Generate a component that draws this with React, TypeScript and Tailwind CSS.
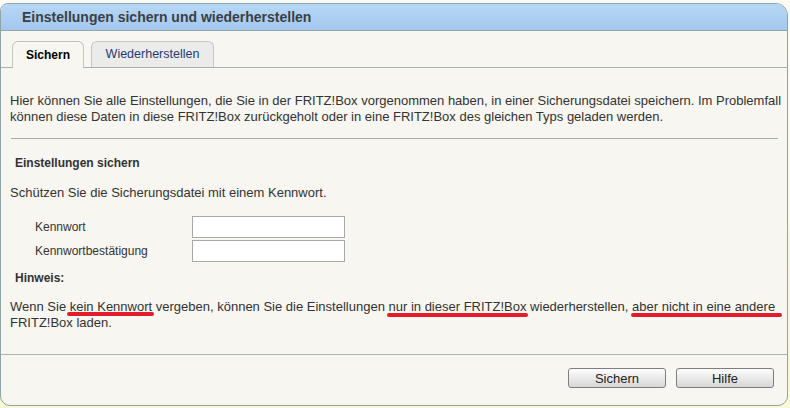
import type { ReactNode } from 'react'

// Hand-drawn red marker stroke under a phrase
function Marked({ children, className }: { children: ReactNode; className: string }) {
  return (
    <span className="relative">
      {children}
      <span className={`absolute h-[4px] rounded-full bg-[#e41b2b] ${className}`} />
    </span>
  )
}

export default function App() {
  return (
    <div className="w-[790px] h-[408px] pt-[3px] pr-[2px] pb-[2px] bg-gradient-to-b from-[#fbfbf6] to-[#f8f9d6] font-['Liberation_Sans',Arial,sans-serif] text-[#333]">
      <div className="h-[403px] flex flex-col border border-[#8fa4a4] rounded-tl-[8px] rounded-tr-[12px] rounded-b-[10px] bg-[#f7f6f1] overflow-hidden">
        {/* Title bar */}
        <div className="h-[27px] shrink-0 flex items-center pl-[21px] border-b border-[#93a5a5] bg-gradient-to-b from-[#b7d7f5] to-[#a2c8ee] text-[14px] font-bold text-[#3b3f44]">
          Einstellungen sichern und wiederherstellen
        </div>

        {/* Tabs */}
        <div className="h-[37px] shrink-0 flex items-end gap-[7px] pt-[10px] pl-[11px] border-b border-[#a7b3b0]">
          <div className="w-[72px] h-[27px] -mb-px flex items-center justify-center border-x border-t border-[#bfc5c2] rounded-t-[6px] bg-[#f7f6f1] text-[12px] font-bold text-black">
            Sichern
          </div>
          <div className="w-[123px] h-[26px] flex items-center justify-center border-x border-t border-[#c3c7c5] rounded-t-[6px] bg-[#ebebea] text-[12.5px] text-[#1f3c72]">
            Wiederherstellen
          </div>
        </div>

        {/* Body */}
        <div className="flex-1 px-[9px] pt-[25px]">
          <p className="text-[13px] leading-[16px] whitespace-nowrap">
            Hier können Sie alle Einstellungen, die Sie in der FRITZ!Box vorgenommen haben, in einer Sicherungsdatei speichern. Im Problemfall
            <br />
            können diese Daten in diese FRITZ!Box zurückgeholt oder in eine FRITZ!Box des gleichen Typs geladen werden.
          </p>

          <hr className="mt-[13px] ml-[1px] border-0 h-px bg-[#9fb0ac]" />

          <h3 className="mt-[16px] pl-[5px] text-[12px] leading-[16px] font-bold">Einstellungen sichern</h3>

          <p className="mt-[14px] text-[13px] leading-[16px]">Schützen Sie die Sicherungsdatei mit einem Kennwort.</p>

          <div className="mt-[15px] flex flex-col gap-[2px] pl-[25px] text-[12px]">
            <div className="flex items-center h-[22px]">
              <span className="w-[157px]">Kennwort</span>
              <input type="password" className="w-[153px] h-[22px] border border-[#a8a8ab] bg-white outline-none" />
            </div>
            <div className="flex items-center h-[22px]">
              <span className="w-[157px]">Kennwortbestätigung</span>
              <input type="password" className="w-[153px] h-[22px] border border-[#a8a8ab] bg-white outline-none" />
            </div>
          </div>

          <h3 className="mt-[8px] pl-[5px] text-[12px] leading-[16px] font-bold">Hinweis:</h3>

          <p className="mt-[13px] text-[13px] leading-[16px] whitespace-nowrap">
            Wenn Sie <Marked className="left-[-3px] right-[-2px] top-[13px]">kein Kennwort</Marked> vergeben, können Sie die Einstellungen{' '}
            <Marked className="left-[-2px] right-[-1px] top-[14px]">nur in dieser FRITZ!Box</Marked> wiederherstellen,{' '}
            <Marked className="left-[-1px] right-[-7px] top-[14px]">aber nicht in eine andere</Marked>
            <br />
            FRITZ!Box laden.
          </p>
        </div>

        {/* Footer buttons */}
        <div className="h-[51px] shrink-0 flex justify-end gap-[10px] pt-[13px] pr-[13px] border-t border-[#a7b3b0]">
          <button className="w-[98px] h-[20px] border border-[#7d7d7d] rounded-[3px] bg-gradient-to-b from-[#fdfdfd] to-[#d7d7d7] text-[13px] leading-none text-[#222]">
            Sichern
          </button>
          <button className="w-[98px] h-[20px] border border-[#7d7d7d] rounded-[3px] bg-gradient-to-b from-[#fdfdfd] to-[#d7d7d7] text-[13px] leading-none text-[#222]">
            Hilfe
          </button>
        </div>
      </div>
    </div>
  )
}
